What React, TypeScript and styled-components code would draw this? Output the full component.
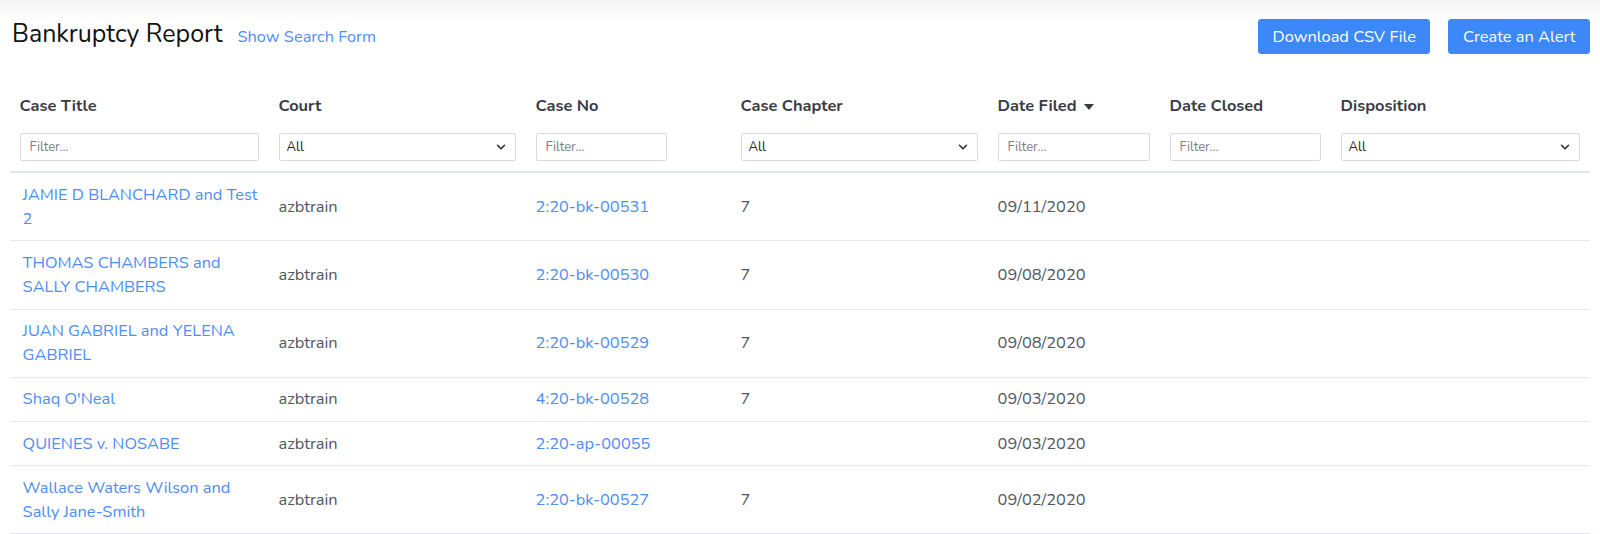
import React from 'react';
import styled, { createGlobalStyle } from 'styled-components';
import { ChevronDown } from 'lucide-react';

const GlobalStyle = createGlobalStyle`
  html, body {
    margin: 0;
    padding: 0;
    background: #fff;
  }
  body {
    font-family: "Nunito", "Lato", "Noto Sans", sans-serif;
    font-size: 16.4px;
    color: #555a64;
    background: linear-gradient(#f4f4f4 0px, #ffffff 22px) no-repeat;
  }
  * {
    box-sizing: border-box;
  }
`;

const Page = styled.div`
  padding: 19px 10px 0 10px;
`;

const TopBar = styled.div`
  display: flex;
  align-items: flex-start;
  justify-content: space-between;
`;

const TitleGroup = styled.div`
  display: flex;
  align-items: baseline;
  gap: 15px;
  padding-left: 2px;
`;

const Title = styled.h1`
  margin: 0;
  font-size: 25px;
  line-height: 30px;
  font-weight: 400;
  color: #111;
`;

const TextLink = styled.a`
  color: #4e8df5;
  text-decoration: none;
  font-size: 16.4px;
  cursor: pointer;
`;

const Actions = styled.div`
  display: flex;
  gap: 18px;
`;

const PrimaryButton = styled.button`
  height: 35px;
  padding: 0 13.5px;
  border: 1px solid #3d88f8;
  border-radius: 3px;
  background: #3d88f8;
  color: #fff;
  font-family: inherit;
  font-size: 16.4px;
  cursor: pointer;
`;

const Table = styled.table`
  width: 100%;
  margin-top: 30px;
  border-collapse: collapse;
  table-layout: fixed;
`;

const HeadCell = styled.th<{ $w?: number }>`
  width: ${({ $w }) => ($w ? `${$w}px` : 'auto')};
  padding: 9.6px 9.6px 10.6px;
  text-align: left;
  vertical-align: top;
  font-weight: 700;
  color: #3a3b45;
  line-height: 24px;
  border-bottom: 2px solid #e3e6f0;
`;

const HeadLabel = styled.div`
  display: flex;
  align-items: center;
  gap: 7px;
`;

const SortCaret = styled.span`
  width: 0;
  height: 0;
  border-left: 5.5px solid transparent;
  border-right: 5.5px solid transparent;
  border-top: 6px solid #3a3b45;
  margin-top: 2px;
`;

const FilterWrap = styled.div<{ $w?: number }>`
  position: relative;
  margin-top: 15px;
  width: ${({ $w }) => ($w ? `${$w}px` : '100%')};
`;

const FilterInput = styled.input`
  display: block;
  width: 100%;
  height: 28px;
  padding: 0 9px;
  border: 1px solid #d8dbe3;
  border-radius: 2px;
  font-family: inherit;
  font-size: 13px;
  color: #3a3b45;
  background: #fff;
  outline: none;

  &::placeholder {
    color: #7b7e88;
  }
`;

const FilterSelect = styled.select`
  display: block;
  width: 100%;
  height: 28px;
  padding: 0 28px 0 7px;
  border: 1px solid #d8dbe3;
  border-radius: 2px;
  font-family: inherit;
  font-size: 13px;
  color: #222;
  background: #fff;
  appearance: none;
  outline: none;
`;

const SelectChevron = styled(ChevronDown)`
  position: absolute;
  right: 8px;
  top: 7px;
  pointer-events: none;
  color: #222;
`;

const Row = styled.tr`
  border-bottom: 1px solid #e3e6f0;
`;

const Cell = styled.td`
  padding: 9.6px;
  line-height: 24px;
  vertical-align: middle;
  color: #51555e;
`;

const CellLink = styled.a<{ $indent?: boolean }>`
  display: inline-block;
  padding-left: ${({ $indent }) => ($indent ? '3px' : '0')};
  color: #4e8df5;
  text-decoration: none;
  cursor: pointer;
`;

type Column = {
  label: string;
  width?: number;
  filter: 'text' | 'select';
  filterWidth?: number;
  sorted?: boolean;
};

const columns: Column[] = [
  { label: 'Case Title', width: 259, filter: 'text' },
  { label: 'Court', width: 257, filter: 'select' },
  { label: 'Case No', width: 205, filter: 'text', filterWidth: 131 },
  { label: 'Case Chapter', width: 257, filter: 'select' },
  { label: 'Date Filed', width: 172, filter: 'text', sorted: true },
  { label: 'Date Closed', width: 171, filter: 'text' },
  { label: 'Disposition', filter: 'select' },
];

const cases = [
  { title: 'JAMIE D BLANCHARD and Test 2', court: 'azbtrain', no: '2:20-bk-00531', chapter: '7', filed: '09/11/2020' },
  { title: 'THOMAS CHAMBERS and SALLY CHAMBERS', court: 'azbtrain', no: '2:20-bk-00530', chapter: '7', filed: '09/08/2020' },
  { title: 'JUAN GABRIEL and YELENA GABRIEL', court: 'azbtrain', no: '2:20-bk-00529', chapter: '7', filed: '09/08/2020' },
  { title: "Shaq O'Neal", court: 'azbtrain', no: '4:20-bk-00528', chapter: '7', filed: '09/03/2020' },
  { title: 'QUIENES v. NOSABE', court: 'azbtrain', no: '2:20-ap-00055', chapter: '', filed: '09/03/2020' },
  { title: 'Wallace Waters Wilson and Sally Jane-Smith', court: 'azbtrain', no: '2:20-bk-00527', chapter: '7', filed: '09/02/2020' },
];

const App = () => {
  return (
    <>
      <GlobalStyle />
      <Page>
        <TopBar>
          <TitleGroup>
            <Title>Bankruptcy Report</Title>
            <TextLink>Show Search Form</TextLink>
          </TitleGroup>
          <Actions>
            <PrimaryButton>Download CSV File</PrimaryButton>
            <PrimaryButton>Create an Alert</PrimaryButton>
          </Actions>
        </TopBar>

        <Table>
          <thead>
            <tr>
              {columns.map((col) => (
                <HeadCell key={col.label} $w={col.width}>
                  <HeadLabel>
                    {col.label}
                    {col.sorted && <SortCaret />}
                  </HeadLabel>
                  <FilterWrap $w={col.filterWidth}>
                    {col.filter === 'text' ? (
                      <FilterInput placeholder="Filter..." />
                    ) : (
                      <>
                        <FilterSelect defaultValue="All">
                          <option>All</option>
                        </FilterSelect>
                        <SelectChevron size={14} strokeWidth={2.5} />
                      </>
                    )}
                  </FilterWrap>
                </HeadCell>
              ))}
            </tr>
          </thead>
          <tbody>
            {cases.map((c) => (
              <Row key={c.no}>
                <Cell>
                  <CellLink $indent>{c.title}</CellLink>
                </Cell>
                <Cell>{c.court}</Cell>
                <Cell>
                  <CellLink>{c.no}</CellLink>
                </Cell>
                <Cell>{c.chapter}</Cell>
                <Cell>{c.filed}</Cell>
                <Cell />
                <Cell />
              </Row>
            ))}
          </tbody>
        </Table>
      </Page>
    </>
  );
};

export default App;
